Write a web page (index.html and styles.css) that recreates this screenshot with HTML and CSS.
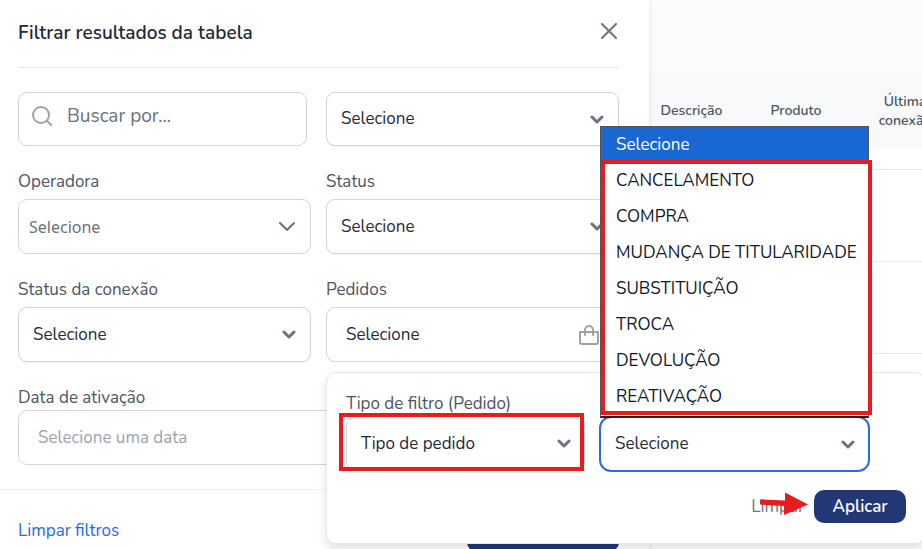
FILE: index.html
```html
<!DOCTYPE html>
<html lang="pt-BR">
<head>
<meta charset="utf-8">
<meta name="viewport" content="width=device-width, initial-scale=1">
<title>Filtrar resultados da tabela</title>
<link rel="stylesheet" href="styles.css">
</head>
<body>
<div class="page">
  <aside class="drawer">
    <header class="drawer-head">
      <h2>Filtrar resultados da tabela</h2>
      <button class="close" type="button" aria-label="Fechar">
        <svg width="16" height="16" viewBox="0 0 16 16"><path d="M1 1l14 14M15 1L1 15"/></svg>
      </button>
    </header>
    <div class="fields">
      <div class="control search">
        <svg class="search-icon" width="20" height="20" viewBox="0 0 20 20"><circle cx="9" cy="9" r="8"/><path d="M14.8 14.8l4.400 4.200"/></svg>
        <input type="text" placeholder="Buscar por..." aria-label="Buscar por">
      </div>
      <div class="control raised short-control">
        <select aria-label="Filtro"><option>Selecione</option></select>
        <svg class="chevron bold" width="14" height="9" viewBox="0 0 14 9"><path d="M2 2l5 5 5-5"/></svg>
      </div>
      <div class="field">
        <label for="operadora">Operadora</label>
        <div class="control plain">
          <select id="operadora"><option>Selecione</option></select>
          <svg class="chevron" width="16" height="10" viewBox="0 0 16 10"><path d="M1 1l7 7 7-7"/></svg>
        </div>
      </div>
      <div class="field">
        <label for="status">Status</label>
        <div class="control raised">
          <select id="status"><option>Selecione</option></select>
          <svg class="chevron bold" width="14" height="9" viewBox="0 0 14 9"><path d="M2 2l5 5 5-5"/></svg>
        </div>
      </div>
      <div class="field">
        <label for="conexao">Status da conexão</label>
        <div class="control raised">
          <select id="conexao"><option>Selecione</option></select>
          <svg class="chevron bold" width="14" height="9" viewBox="0 0 14 9"><path d="M2 2l5 5 5-5"/></svg>
        </div>
      </div>
      <div class="field">
        <label for="pedidos">Pedidos</label>
        <div class="control wide-pad">
          <input class="value" id="pedidos" type="text" value="Selecione" readonly>
          <svg class="bag" width="20" height="20" viewBox="0 0 20 20"><path d="M1 7h18v10a2 2 0 0 1-2 2H3a2 2 0 0 1-2-2zM6 10V5a4 4 0 0 1 8 0v5"/></svg>
        </div>
        <section class="popover">
          <div class="popover-fields">
            <div class="popover-field">
              <label for="tipo">Tipo de filtro (Pedido)</label>
              <div class="control">
                <select id="tipo"><option>Tipo de pedido</option></select>
                <svg class="chevron bold" width="14" height="9" viewBox="0 0 14 9"><path d="M2 2l5 5 5-5"/></svg>
                <span class="mark mark-type"></span>
              </div>
            </div>
            <div class="popover-field">
              <div class="control focused">
                <select aria-label="Valor do pedido"><option>Selecione</option></select>
                <svg class="chevron bold" width="14" height="9" viewBox="0 0 14 9"><path d="M2 2l5 5 5-5"/></svg>
                <ul class="options" role="listbox" aria-label="Opções">
                  <li class="selected" role="option" aria-selected="true">Selecione</li>
                  <li role="option">CANCELAMENTO</li>
                  <li role="option">COMPRA</li>
                  <li role="option">MUDANÇA DE TITULARIDADE</li>
                  <li role="option">SUBSTITUIÇÃO</li>
                  <li role="option">TROCA</li>
                  <li role="option">DEVOLUÇÃO</li>
                  <li role="option">REATIVAÇÃO</li>
                </ul>
                <span class="mark mark-options"></span>
              </div>
            </div>
          </div>
          <div class="popover-actions">
            <button class="clear" type="button">Limpar
              <svg class="arrow" width="48" height="24" viewBox="0 0 48 24"><path d="M0 7.500L25 8.500V0.500L48 12.500 24 23V14L0 12.500z"/></svg>
            </button>
            <button class="apply" type="button">Aplicar</button>
          </div>
        </section>
      </div>
      <div class="field date">
        <label for="data">Data de ativação</label>
        <div class="control">
          <input id="data" type="text" placeholder="Selecione uma data">
        </div>
      </div>
    </div>
    <footer class="drawer-foot">
      <a href="#">Limpar filtros</a>
      <button class="submit" type="button">Filtrar</button>
    </footer>
  </aside>
  <main class="results">
    <table>
      <colgroup><col class="c1"><col class="c2"><col class="c3"></colgroup>
      <thead><tr><th>Descrição</th><th>Produto</th><th>Última<br>conexão</th></tr></thead>
      <tbody>
        <tr class="short"><td></td><td></td><td></td></tr>
        <tr><td></td><td></td><td></td></tr>
        <tr><td></td><td></td><td></td></tr>
        <tr><td></td><td></td><td></td></tr>
      </tbody>
    </table>
  </main>
</div>
</body>
</html>
```
FILE: styles.css
```css
* { box-sizing: border-box; }
body {
  margin: 0;
  overflow: hidden;
  background: #fff;
  color: #1f2937;
  font: 17px/24px Nunito, Lato, sans-serif;
}
button, input, select { font: inherit; color: inherit; }
svg { fill: none; stroke: #6b7280; stroke-width: 2; stroke-linecap: round; stroke-linejoin: round; }

.page { display: flex; min-height: 100vh; }
.drawer {
  position: relative;
  z-index: 1;
  flex: 0 0 649px;
  background: #fff;
  box-shadow: 0 0 6px rgba(0, 0, 0, .1);
}
.drawer-head {
  display: flex;
  align-items: center;
  justify-content: space-between;
  height: 68px;
  margin: 0 30px 0 18px;
  padding-bottom: 4px;
  border-bottom: 1px solid #e5e7eb;
}
.drawer-head h2 { margin: 0; padding-top: 2px; font-size: 19px; font-weight: 600; }
.close { display: flex; padding: 0 2px 2px; border: 0; background: none; }

.fields {
  display: grid;
  grid-template-columns: 1fr 1fr;
  gap: 23px 15px;
  padding: 24px 30px 24px 18px;
}
.field { position: relative; }
.field label { display: block; height: 30px; padding-top: 1px; color: #4b5563; }
.control {
  position: relative;
  display: flex;
  align-items: center;
  height: 55px;
  border: 1px solid #d1d5db;
  border-radius: 9px;
  background: #fff;
}
.control select, .control input {
  flex: 1;
  width: 100%;
  min-width: 0;
  height: 100%;
  padding: 0 14px;
  border: 0;
  outline: 0;
  background: none;
  appearance: none;
}
.raised { box-shadow: 0 1px 2px rgba(0, 0, 0, .06); }
.search, .short-control { height: 54px; }
.search { margin-right: 4px; }
.search .search-icon { margin: 0 0 6px 13px; stroke: #9ca3af; }
.search input { padding: 0 15px 6px; font-size: 19px; }
.search input::placeholder { color: #6b7280; }
.chevron { position: absolute; right: 15px; }
.chevron.bold { right: 14px; stroke-width: 3; }
.plain select { padding: 0 10px; color: #6b7280; font-family: "Noto Sans", sans-serif; font-size: 16px; }
.wide-pad .value { padding: 0 19px; }
.bag { position: absolute; right: 19px; stroke: #9ca3af; }
.date { grid-column: 1 / -1; }
.date label { height: 25px; }
.date input { padding: 0 19px; }
.date input::placeholder { color: #9ca3af; }

.drawer-foot {
  display: flex;
  align-items: center;
  justify-content: space-between;
  padding: 20px 30px 20px 18px;
  border-top: 1px solid #f0f1f3;
}
.drawer-foot a { color: #2468f2; text-decoration: none; }
.submit {
  width: 152px;
  height: 42px;
  border: 0;
  border-radius: 10px;
  background: #223876;
  color: #fff;
}

.popover {
  position: absolute;
  z-index: 2;
  top: calc(100% + 10px);
  left: 0;
  width: 599px;
  padding: 18px 18px 20px 19px;
  border: 1px solid #e5e7eb;
  border-radius: 10px;
  background: #fff;
  box-shadow: 0 5px 10px rgba(0, 0, 0, .12);
}
.popover-fields { display: flex; gap: 14px; align-items: flex-end; padding-right: 36px; }
.popover-field { flex: 0 0 239px; }
.popover-field + .popover-field { flex: 1; }
.popover-field label { height: 25px; }
.popover-field .chevron { right: 13px; }
.focused { height: 56px; margin-bottom: -1px; border: 2px solid #2f6be0; border-radius: 12px; }
.options {
  position: absolute;
  bottom: 100%;
  left: -1px;
  right: -1px;
  margin: 0;
  padding: 0 0 1px;
  border: 1px solid #555;
  border-bottom: 2px solid #222;
  background: #fff;
  color: #111827;
  list-style: none;
}
.options li { height: 36px; padding: 6px 15px; white-space: nowrap; }
.options .selected { background: #1967d2; color: #fff; }
.mark { position: absolute; border: 4px solid #e81b1e; pointer-events: none; }
.mark-type { inset: -4px 0 -1px -8px; }
.mark-options { bottom: calc(100% + 3px); left: 0; right: -4px; height: 255px; }

.popover-actions { display: flex; justify-content: flex-end; gap: 10px; margin-top: 19px; }
.clear { position: relative; padding: 0; border: 0; background: none; color: #6b7280; }
.arrow { position: absolute; top: 2px; left: 9px; fill: #e81b1e; stroke: none; }
.apply {
  width: 92px;
  height: 33px;
  border: 0;
  border-radius: 10px;
  background: #223876;
  color: #fff;
  font-weight: 600;
}

.results { flex: 1; min-width: 0; padding-top: 72px; background: linear-gradient(#fcfcfc 72px, #fff 72px); }
table { width: 303px; table-layout: fixed; border-collapse: collapse; }
.c1 { width: 85px; }
.c2 { width: 124px; }
.c3 { width: 94px; }
th { height: 77px; padding: 0; background: #f8f9fb; color: #4b5563; font-size: 14px; font-weight: 600; line-height: 19px; }
td { height: 92px; padding: 0; border-bottom: 1px solid #e5e7eb; }
.short td { height: 20px; }
```
